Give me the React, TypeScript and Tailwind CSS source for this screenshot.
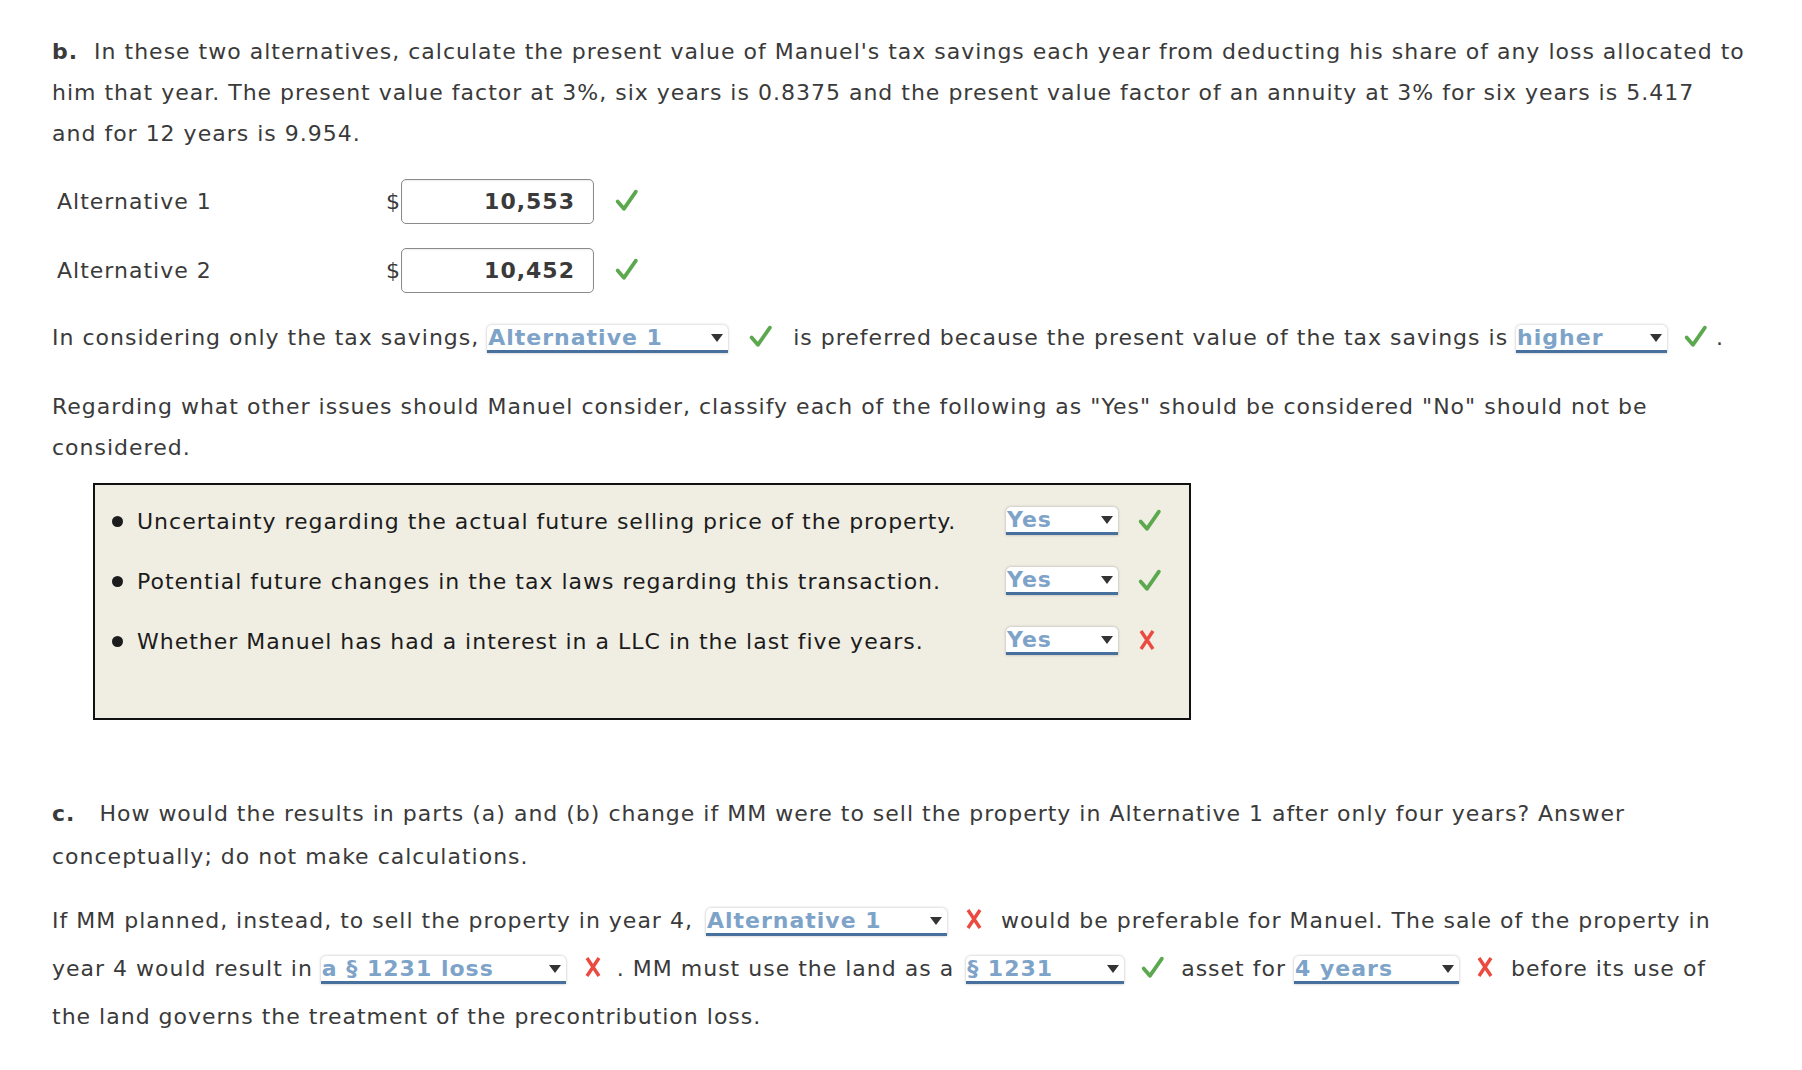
import type { ReactNode } from 'react';

const Check = () => (
  <svg viewBox="0 0 24 24" className="inline-block w-[25px] h-[25px] align-[-4px]" aria-hidden>
    <path d="M3.5 13 L9.5 20 L21 3.5" fill="none" stroke="#5ba84e" strokeWidth="3.6" strokeLinecap="round" strokeLinejoin="round" />
  </svg>
);

const Cross = () => (
  <svg viewBox="0 0 20 24" className="inline-block w-[20px] h-[24px] align-[-3px]" aria-hidden>
    <path d="M4 3 L16 21 M16 3 L4 21" fill="none" stroke="#ea4a3f" strokeWidth="3.4" strokeLinecap="butt" />
  </svg>
);

function Dropdown({ value, width }: { value: string; width: string }) {
  return (
    <span
      className={`relative inline-block ${width} align-baseline bg-white rounded-t-[5px] shadow-[0_0_3px_rgba(0,0,0,0.28)] border-b-[3px] border-[#47709c] leading-[25px]`}
    >
      <span className="font-bold text-[#7ea3c8] pl-[1px]">{value}</span>
      <span className="absolute right-[5px] top-[9px] w-0 h-0 border-l-[6px] border-r-[6px] border-t-[8px] border-l-transparent border-r-transparent border-t-[#333]" />
    </span>
  );
}

function AltRow({ label, amount }: { label: string; amount: string }) {
  return (
    <div className="flex items-center pl-[5px]">
      <span className="w-[329px]">{label}</span>
      <span>$</span>
      <span className="w-[193px] h-[45px] flex items-center justify-end pr-[18px] border-[1.5px] border-[#8a8a8a] rounded-[5px] font-bold shadow-[inset_0_1px_2px_rgba(0,0,0,0.08)]">
        {amount}
      </span>
      <span className="ml-[20px]">
        <Check />
      </span>
    </div>
  );
}

function Bullet({ children, mark }: { children: ReactNode; mark: ReactNode }) {
  return (
    <div className="flex items-center h-[60px]">
      <span className="w-[11px] h-[11px] rounded-full bg-[#1c1c1c] mr-[14px]" />
      <span className="w-[869px] text-[#1c1c1c]">{children}</span>
      <Dropdown value="Yes" width="w-[112px]" />
      <span className="ml-[19px]">{mark}</span>
    </div>
  );
}

export default function App() {
  return (
    <div className="bg-white min-h-screen pl-[52px] pr-[40px] pt-[31px] text-[22px] tracking-[1px] leading-[41px] text-[#3a3a3a] font-['DejaVu_Sans',Verdana,sans-serif]">
      <p>
        <b>b.</b>&nbsp; In these two alternatives, calculate the present value of Manuel's tax savings each year from
        deducting his share of any loss allocated to him that year. The present value factor at 3%, six years is 0.8375
        and the present value factor of an annuity at 3% for six years is 5.417
        <br />
        and for 12 years is 9.954.
      </p>

      <div className="mt-[25px] flex flex-col gap-[24px]">
        <AltRow label="Alternative 1" amount="10,553" />
        <AltRow label="Alternative 2" amount="10,452" />
      </div>

      <p className="mt-[24px] whitespace-nowrap">
        In considering only the tax savings, <Dropdown value="Alternative 1" width="w-[241px]" />{' '}
        <span className="mx-[12px]"><Check /></span> is preferred because the present value of the tax savings is{' '}
        <Dropdown value="higher" width="w-[151px]" /> <span className="ml-[8px]"><Check /></span> .
      </p>

      <p className="mt-[28px]">
        Regarding what other issues should Manuel consider, classify each of the following as "Yes" should be considered
        "No" should not be considered.
      </p>

      <div className="mt-[15px] ml-[41px] w-[1098px] h-[237px] bg-[#f0eee3] border-2 border-[#111] pl-[17px] pt-[6px]">
        <Bullet mark={<Check />}>Uncertainty regarding the actual future selling price of the property.</Bullet>
        <Bullet mark={<Check />}>Potential future changes in the tax laws regarding this transaction.</Bullet>
        <Bullet mark={<Cross />}>Whether Manuel has had a interest in a LLC in the last five years.</Bullet>
      </div>

      <p className="mt-[72px] leading-[43px]">
        <b>c.</b>&nbsp;&nbsp; How would the results in parts (a) and (b) change if MM were to sell the property in
        Alternative 1 after only four years? Answer conceptually; do not make calculations.
      </p>

      <p className="mt-[19px] leading-[48px]">
        If MM planned, instead, to sell the property in year 4,{' '}
        <span className="ml-[5px]"><Dropdown value="Alternative 1" width="w-[241px]" /></span>{' '}
        <span className="mx-[9px]"><Cross /></span> would be preferable for Manuel. The sale of the property in year 4
        would result in <Dropdown value="a § 1231 loss" width="w-[245px]" />{' '}
        <span className="ml-[9px] mr-[14px]"><Cross /></span>. MM must use the land as a{' '}
        <span className="ml-[4px]"><Dropdown value="§ 1231" width="w-[158px]" /></span>{' '}
        <span className="mx-[8px]"><Check /></span> asset for <Dropdown value="4 years" width="w-[165px]" />{' '}
        <span className="mx-[8px]"><Cross /></span> before its use of
        <br />
        the land governs the treatment of the precontribution loss.
      </p>
    </div>
  );
}
